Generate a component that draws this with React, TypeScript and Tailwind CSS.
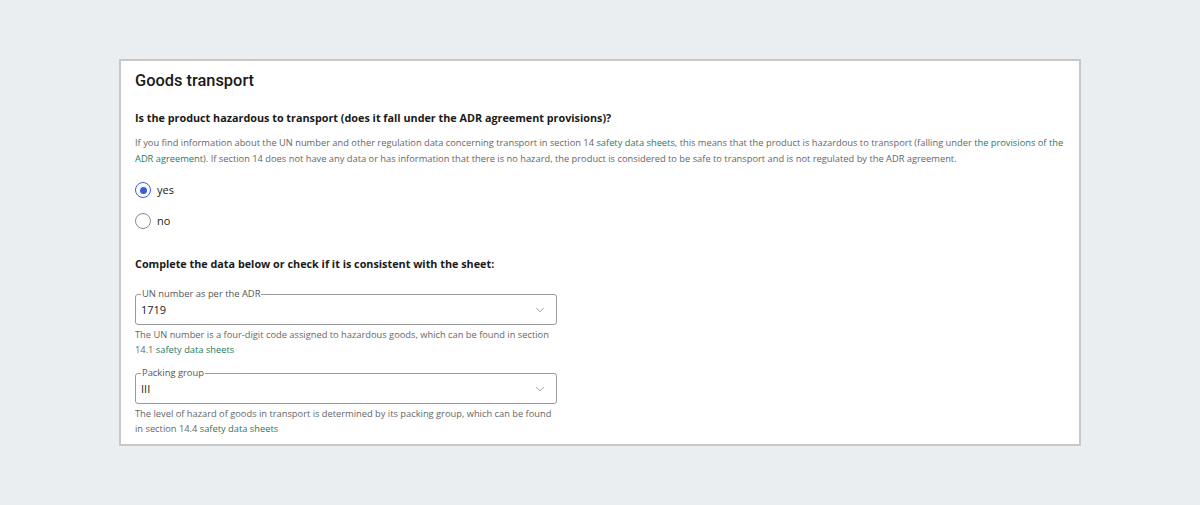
import { ChevronDown } from "lucide-react"

const link = "text-[#1e7a63]"

function Radio({ label, checked }: { label: string; checked?: boolean }) {
  return (
    <label className="flex items-center gap-[6px] h-4">
      <span
        className={
          "flex h-4 w-4 items-center justify-center rounded-full border bg-white " +
          (checked ? "border-[#3b5bdb] border-[1.5px]" : "border-[#8a8a8a]")
        }
      >
        {checked && <span className="h-[7px] w-[7px] rounded-full bg-[#3b5bdb]" />}
      </span>
      <span className="text-[11px] text-[#222]">{label}</span>
    </label>
  )
}

function SelectField({ label, value, help }: { label: string; value: string; help: React.ReactNode }) {
  return (
    <div className="w-[422px]">
      {/* outlined select, label sits on the top border */}
      <div className="relative flex h-[31px] items-center justify-between rounded-[3px] border border-[#9a9a9a] pl-[5px] pr-[9px]">
        <span className="absolute -top-[8px] left-[5px] bg-white px-[1px] text-[9.4px] leading-[14px] text-[#555]">
          {label}
        </span>
        <span className="pt-[1px] text-[11px] text-[#222]">{value}</span>
        <ChevronDown className="h-[14px] w-[14px] text-[#777]" strokeWidth={1.2} />
      </div>
      <p className="mt-[2px] text-[9.3px] leading-[15px] text-[#666]">{help}</p>
    </div>
  )
}

export default function App() {
  return (
    <div className="min-h-[505px] bg-[#ebeef1] pt-[59px] px-[119px] font-['Open_Sans',sans-serif]">
      <div className="h-[387px] border-2 border-[#c8c8c8] bg-white px-[14px] pt-[8px]">
        <h2 className="font-['Roboto',sans-serif] text-[16.4px] font-medium leading-[24px] text-[#1a1a1a]">
          Goods transport
        </h2>
        <h3 className="mt-[17px] text-[10.8px] font-bold leading-[16px] text-[#1a1a1a]">
          Is the product hazardous to transport (does it fall under the ADR agreement provisions)?
        </h3>
        <p className="mt-[9px] text-[9.3px] leading-[16px] text-[#666]">
          If you find information about the UN number and other regulation data concerning transport in section 14{" "}
          <span className={link}>safety data sheets</span>, this means that the product is hazardous to transport
          (falling under <span className={link}>the provisions of the ADR agreement</span>). If section 14 does not have
          any data or has information that there is no hazard, the product is considered to be safe to transport and is
          not regulated by the ADR agreement.
        </p>
        <div className="mt-[15px] flex flex-col gap-[15px]">
          <Radio label="yes" checked />
          <Radio label="no" />
        </div>
        <h3 className="mt-[27px] text-[10.8px] font-bold leading-[16px] text-[#1a1a1a]">
          Complete the data below or check if it is consistent with the sheet:
        </h3>
        <div className="mt-[22px] flex flex-col gap-[16px]">
          <SelectField
            label="UN number as per the ADR"
            value="1719"
            help={
              <>
                The UN number is a four-digit code assigned to hazardous goods, which can be found in section 14.1{" "}
                <span className={link}>safety data sheets</span>
              </>
            }
          />
          <SelectField
            label="Packing group"
            value="III"
            help={
              <>
                The level of hazard of goods in transport is determined by its packing group, which can be found in
                section 14.4 <span className={link}>safety data sheets</span>
              </>
            }
          />
        </div>
      </div>
    </div>
  )
}
